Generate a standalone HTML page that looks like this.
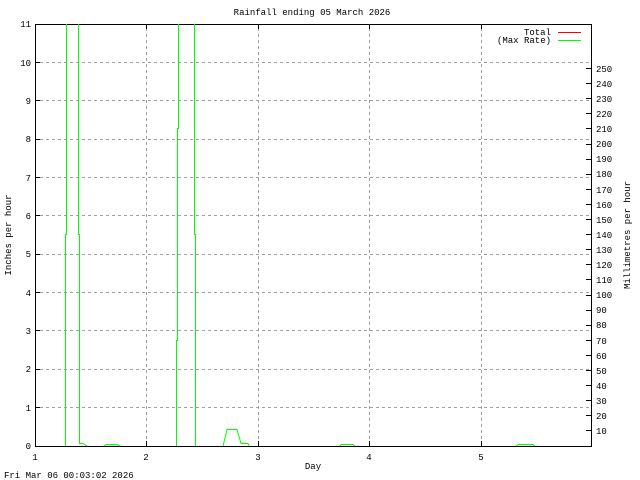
<!DOCTYPE html>
<html><head><meta charset="utf-8"><style>
html,body{margin:0;padding:0;background:#fff;}
svg{display:block;}
text{font-family:"Liberation Mono","DejaVu Sans Mono",monospace;font-size:9px;fill:#000;}
</style></head><body>
<svg width="640" height="480" viewBox="0 0 640 480" xmlns="http://www.w3.org/2000/svg">
<rect width="640" height="480" fill="#fff"/>
<g stroke="#a0a0a0" stroke-width="1" stroke-dasharray="3,3" fill="none">
<path d="M40 407.5H591M40 369.5H591M40 330.5H591M40 292.5H591M40 254.5H591M40 215.5H591M40 177.5H591M40 139.5H591M40 100.5H591M40 62.5H591"/>
<path d="M146.5 28V442M258.5 28V442M369.5 28V442M481.5 28V442"/>
</g>
<g stroke="#000" stroke-width="1" fill="none">
<rect x="35.5" y="24.5" width="556" height="422"/>
<path d="M35 407.5h5M35 369.5h5M35 330.5h5M35 292.5h5M35 254.5h5M35 215.5h5M35 177.5h5M35 139.5h5M35 100.5h5M35 62.5h5"/>
<path d="M146.5 446v-5M258.5 446v-5M369.5 446v-5M481.5 446v-5M146.5 24v5M258.5 24v5M369.5 24v5M481.5 24v5"/>
<path d="M586 430.5h5M586 415.5h5M586 400.5h5M586 385.5h5M586 370.5h5M586 355.5h5M586 340.5h5M586 325.5h5M586 310.5h5M586 295.5h5M586 279.5h5M586 264.5h5M586 249.5h5M586 234.5h5M586 219.5h5M586 204.5h5M586 189.5h5M586 174.5h5M586 159.5h5M586 144.5h5M586 128.5h5M586 113.5h5M586 98.5h5M586 83.5h5M586 68.5h5"/>
</g>
<g stroke="#00ff00" stroke-width="1" fill="none">
<path d="M66.5 24V234.5H65.5V446"/>
<path d="M78.5 24V234.5H79.5V443.5H83L87 446"/>
<path d="M104 446L106 444.5H117L120 446"/>
<path d="M178.5 24V128.5H177.5V340.5H176.5V446"/>
<path d="M194.5 24V234.5H195.5V446"/>
<path d="M223 446L227 429.5H237L241 443.5H248L249 446"/>
<path d="M340 446L341 444.5H353L355 446"/>
<path d="M516 446L518 444.5H533L535 446"/>
<path d="M558 40.5H581"/>
</g>
<path d="M558 32.5H581" stroke="#ff0000" stroke-width="1"/>
<text x="312" y="15" text-anchor="middle">Rainfall ending 05 March 2026</text>
<text x="551" y="35" text-anchor="end">Total</text>
<text x="551" y="43" text-anchor="end">(Max Rate)</text>
<g text-anchor="end">
<text x="31" y="449">0</text><text x="31" y="411">1</text><text x="31" y="372">2</text><text x="31" y="334">3</text><text x="31" y="296">4</text><text x="31" y="257">5</text><text x="31" y="219">6</text><text x="31" y="181">7</text><text x="31" y="142">8</text><text x="31" y="104">9</text><text x="31" y="66">10</text><text x="31" y="27">11</text>
</g>
<g text-anchor="middle">
<text x="35" y="460">1</text><text x="146" y="460">2</text><text x="258" y="460">3</text><text x="369" y="460">4</text><text x="481" y="460">5</text>
<text x="313" y="469">Day</text>
</g>
<g>
<text x="596" y="434">10</text><text x="596" y="419">20</text><text x="596" y="404">30</text><text x="596" y="389">40</text><text x="596" y="374">50</text><text x="596" y="359">60</text><text x="596" y="344">70</text><text x="596" y="328">80</text><text x="596" y="313">90</text><text x="596" y="298">100</text><text x="596" y="283">110</text><text x="596" y="268">120</text><text x="596" y="253">130</text><text x="596" y="238">140</text><text x="596" y="223">150</text><text x="596" y="208">160</text><text x="596" y="193">170</text><text x="596" y="177">180</text><text x="596" y="162">190</text><text x="596" y="147">200</text><text x="596" y="132">210</text><text x="596" y="117">220</text><text x="596" y="102">230</text><text x="596" y="87">240</text><text x="596" y="72">250</text>
</g>
<text transform="translate(11,235) rotate(-90)" text-anchor="middle">Inches per hour</text>
<text transform="translate(630,235) rotate(-90)" text-anchor="middle">Millimetres per hour</text>
<text x="4" y="478">Fri Mar 06 00:03:02 2026</text>
</svg>
</body></html>
